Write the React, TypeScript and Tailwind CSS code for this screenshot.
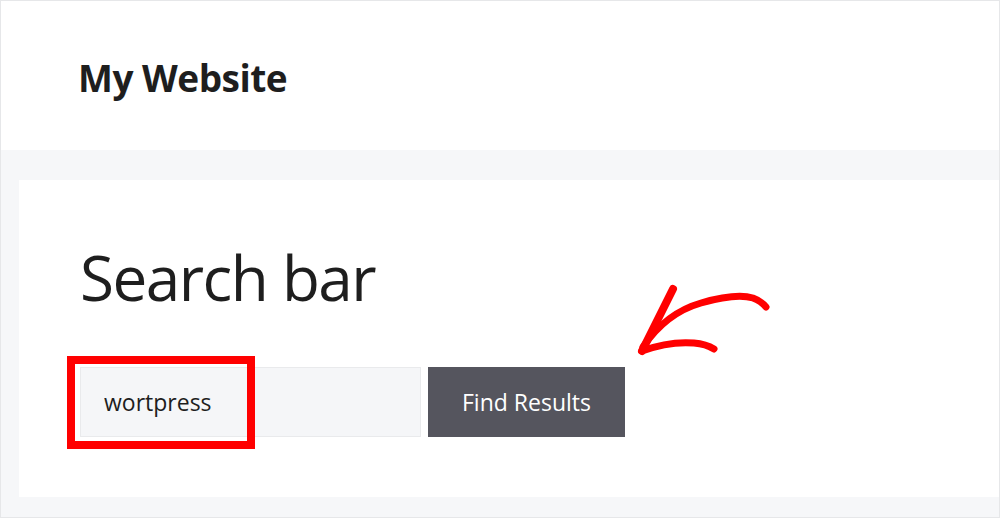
import React from 'react';

const font = { fontFamily: '"Open Sans", "Noto Sans", sans-serif' };

// hand-drawn red arrow pointing at the search field
const Arrow: React.FC = () => (
  <svg
    width="150"
    height="80"
    viewBox="630 280 150 80"
    className="absolute left-[630px] top-[280px]"
    fill="none"
    stroke="#ff0000"
    strokeLinecap="round"
    strokeLinejoin="round"
  >
    <path d="M672 288 Q660 312 641 350" strokeWidth="8" />
    <path d="M642 346 Q665 312 700 302 Q735 292 752 297 Q760 300 765 306" strokeWidth="7" />
    <path d="M641 350 Q668 340 693 342 Q705 343 713 348" strokeWidth="7" />
  </svg>
);

const App: React.FC = () => {
  return (
    <div className="relative w-[1000px] h-[518px] overflow-hidden border border-[#e6e7e9] bg-[#f6f7f9]" style={font}>
      {/* Header */}
      <header className="h-[149px] bg-white flex items-center pl-[77px]">
        <h1 className="text-[37px] font-bold text-[#1e1e1e] tracking-[-0.5px] pt-[4px]">My Website</h1>
      </header>

      {/* Content */}
      <main className="pt-[30px] pl-[18px] pb-[20px]">
        <div className="bg-white h-[317px] pl-[61px] pt-[66px]">
          <h2 className="text-[62px] font-normal leading-none text-[#1e1e1e] tracking-[-1.5px]">Search bar</h2>
          <form className="flex items-stretch gap-[7px] mt-[59px]" onSubmit={e => e.preventDefault()}>
            <div className="relative">
              <input
                type="text"
                defaultValue="wortpress"
                className="w-[341px] h-[70px] bg-[#f5f6f8] border border-[#e9eaec] pl-[23px] text-[23px] text-[#1e1e1e] outline-none"
                style={font}
              />
              <div className="absolute left-[-13px] top-[-11px] w-[188px] h-[93px] border-[8px] border-[#ff0000] pointer-events-none" />
            </div>
            <button
              type="submit"
              className="w-[197px] h-[70px] bg-[#55555e] text-white text-[23px]"
              style={font}
            >
              Find Results
            </button>
          </form>
        </div>
      </main>

      <Arrow />
    </div>
  );
};

export default App;
